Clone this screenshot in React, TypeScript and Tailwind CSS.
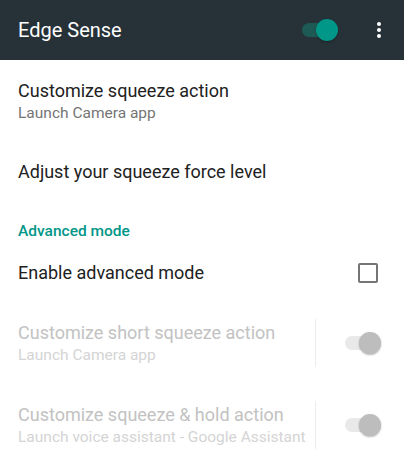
import { useState } from 'react';

interface SwitchProps {
  on: boolean;
  disabled?: boolean;
  dark?: boolean;
}

function Switch({ on, disabled, dark }: SwitchProps) {
  const track = disabled ? 'bg-[#e9e9e9]' : dark ? 'bg-[#1d5a55]' : 'bg-[#80cbc4]';
  const thumb = disabled ? 'bg-[#bdbdbd]' : 'bg-[#009688]';
  return (
    <div className="relative w-[36px] h-[22px] shrink-0">
      <div className={`absolute inset-x-0 top-[4px] h-[14px] rounded-full ${track}`} />
      <div
        className={`absolute top-0 w-[22px] h-[22px] rounded-full shadow-[0_1px_2px_rgba(0,0,0,0.3)] ${thumb} ${
          on ? 'right-0' : 'left-0'
        }`}
      />
    </div>
  );
}

function Pref({ title, summary, disabled }: { title: string; summary?: string; disabled?: boolean }) {
  return (
    <div className="flex flex-col justify-center min-w-0">
      <div
        className={`text-[18px] leading-[24px] whitespace-nowrap ${disabled ? 'text-[#c2c2c2]' : 'text-[#212121]'}`}
      >
        {title}
      </div>
      {summary && (
        <div
          className={`text-[15.5px] leading-[20px] whitespace-nowrap ${disabled ? 'text-[#d4d4d4]' : 'text-[#757575]'}`}
        >
          {summary}
        </div>
      )}
    </div>
  );
}

export default function App() {
  const [enabled] = useState(true);
  const [advanced, setAdvanced] = useState(false);

  return (
    <div className="w-[404px] h-[460px] overflow-hidden bg-white" style={{ fontFamily: 'Roboto, "Noto Sans", sans-serif' }}>
      {/* toolbar */}
      <div className="h-[60px] bg-[#263238] flex items-center pl-[18px] pr-[23px]">
        <div className="flex-1 text-white text-[20px]">Edge Sense</div>
        <Switch on={enabled} dark />
        <div className="ml-[39px] flex flex-col items-center gap-[2px]">
          <span className="w-[4px] h-[4px] rounded-full bg-white" />
          <span className="w-[4px] h-[4px] rounded-full bg-white" />
          <span className="w-[4px] h-[4px] rounded-full bg-white" />
        </div>
      </div>

      <div className="h-[82px] flex items-center px-[18px]">
        <Pref title="Customize squeeze action" summary="Launch Camera app" />
      </div>

      <div className="h-[60px] flex items-center px-[18px]">
        <Pref title="Adjust your squeeze force level" />
      </div>

      <div className="h-[42px] flex items-end px-[18px] pb-[3px]">
        <div className="text-[15.5px] font-medium text-[#009688] leading-[20px]">Advanced mode</div>
      </div>

      <div
        className="h-[58px] flex items-center pl-[18px] pr-[26px] justify-between"
        onClick={() => setAdvanced(!advanced)}
      >
        <Pref title="Enable advanced mode" />
        <div
          className={`w-[20px] h-[20px] rounded-[2px] border-2 ${
            advanced ? 'bg-[#009688] border-[#009688]' : 'border-[#757575]'
          }`}
        />
      </div>

      <div className="h-[82px] flex items-center pl-[18px]">
        <div className="flex-1 min-w-0">
          <Pref title="Customize short squeeze action" summary="Launch Camera app" disabled />
        </div>
        <div className="w-px h-[48px] bg-[#ececec]" />
        <div className="w-[88px] flex justify-center pl-[6px]">
          <Switch on disabled />
        </div>
      </div>

      <div className="h-[82px] flex items-center pl-[18px]">
        <div className="flex-1 min-w-0">
          <Pref title="Customize squeeze & hold action" summary="Launch voice assistant - Google Assistant" disabled />
        </div>
        <div className="w-px h-[48px] bg-[#ececec]" />
        <div className="w-[88px] flex justify-center pl-[6px]">
          <Switch on disabled />
        </div>
      </div>
    </div>
  );
}
